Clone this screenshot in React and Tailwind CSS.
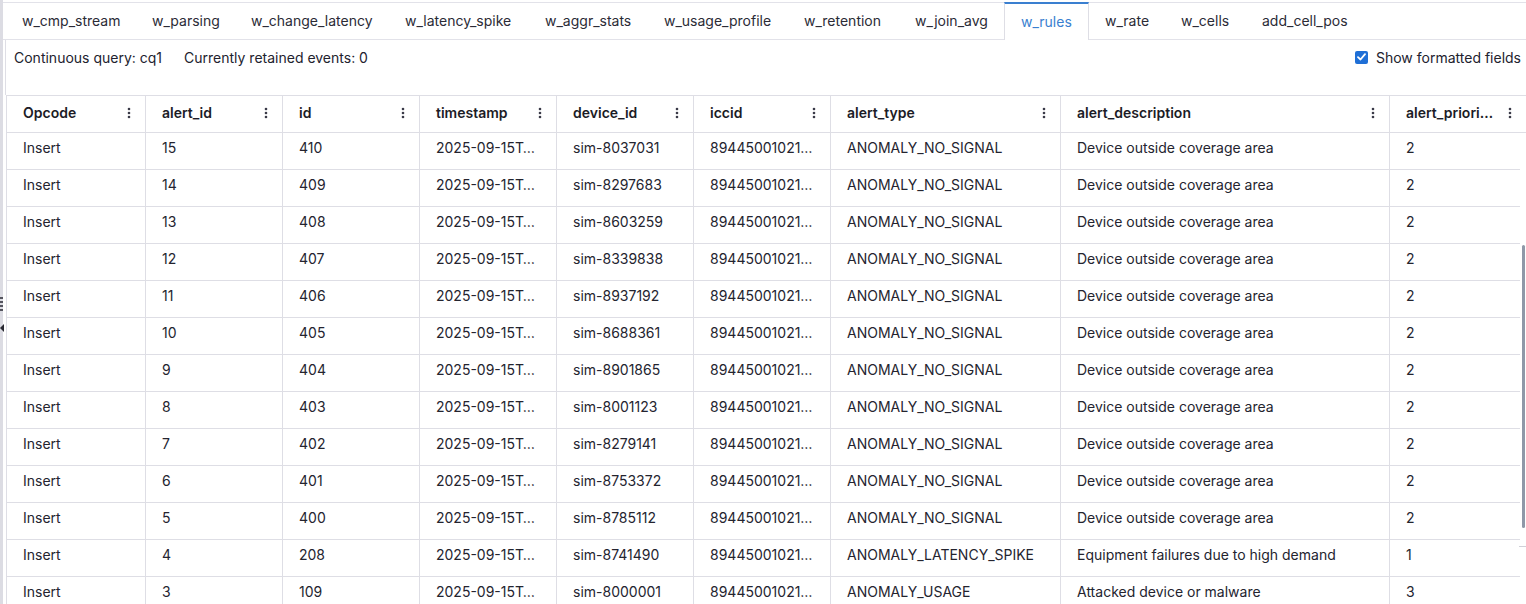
import React from "react";

const tabs = [
  ["w_cmp_stream", "w-[130px]"],
  ["w_parsing", "w-[99px]"],
  ["w_change_latency", "w-[154px]"],
  ["w_latency_spike", "w-[140px]"],
  ["w_aggr_stats", "w-[119px]"],
  ["w_usage_profile", "w-[140px]"],
  ["w_retention", "w-[111px]"],
  ["w_join_avg", "w-[105px]"],
  ["w_rules", "w-[85px]"],
  ["w_rate", "w-[76px]"],
  ["w_cells", "w-[81px]"],
  ["add_cell_pos", "w-auto"],
];

const headers = [
  "Opcode",
  "alert_id",
  "id",
  "timestamp",
  "device_id",
  "iccid",
  "alert_type",
  "alert_description",
  "alert_priori…",
];

const NS = ["ANOMALY_NO_SIGNAL", "Device outside coverage area", "2"];
const rows = [
  ["15", "410", "sim-8037031", ...NS],
  ["14", "409", "sim-8297683", ...NS],
  ["13", "408", "sim-8603259", ...NS],
  ["12", "407", "sim-8339838", ...NS],
  ["11", "406", "sim-8937192", ...NS],
  ["10", "405", "sim-8688361", ...NS],
  ["9", "404", "sim-8901865", ...NS],
  ["8", "403", "sim-8001123", ...NS],
  ["7", "402", "sim-8279141", ...NS],
  ["6", "401", "sim-8753372", ...NS],
  ["5", "400", "sim-8785112", ...NS],
  ["4", "208", "sim-8741490", "ANOMALY_LATENCY_SPIKE", "Equipment failures due to high demand", "1"],
  ["3", "109", "sim-8000001", "ANOMALY_USAGE", "Attacked device or malware", "3"],
];

const grid =
  "grid grid-cols-[139px_137px_137px_137px_137px_137px_230px_329px_137px]";

function Dots() {
  return (
    <svg width="4" height="14" viewBox="0 0 4 14" className="shrink-0">
      <circle cx="2" cy="3" r="1.3" fill="#3a3a48" />
      <circle cx="2" cy="7" r="1.3" fill="#3a3a48" />
      <circle cx="2" cy="11" r="1.3" fill="#3a3a48" />
    </svg>
  );
}

export default function App() {
  return (
    <div
      className="relative flex h-[604px] w-[1526px] overflow-hidden bg-white text-[14px] text-[#22222e]"
      style={{ fontFamily: "Inter, 'Noto Sans', sans-serif" }}
    >
      {/* left strip */}
      <div className="relative w-[3px] shrink-0 bg-[#dcdce3]">
        <div className="absolute left-0 top-[297px] flex flex-col gap-[2px]">
          <div className="h-[2px] w-[3px] bg-[#55555f]" />
          <div className="h-[2px] w-[3px] bg-[#55555f]" />
          <div className="h-[2px] w-[3px] bg-[#55555f]" />
          <div className="h-[2px] w-[3px] bg-[#55555f]" />
        </div>
        <svg
          className="absolute left-0 top-[324px]"
          width="5"
          height="8"
          viewBox="0 0 5 8"
        >
          <path d="M4 0 L0 4 L4 8 Z" fill="#2a2a33" />
        </svg>
      </div>

      <div className="flex min-w-0 flex-1 flex-col">
        {/* tab bar */}
        <div className="mt-[2px] flex h-[38px] shrink-0 border-y border-[#e2e2e9] pl-[3px]">
          {tabs.map(([t, w]) =>
            t === "w_rules" ? (
              <div
                key={t}
                className={`relative -mb-px -mt-px flex shrink-0 items-center border-x border-t-2 border-x-[#dedee5] border-t-[#3a7fd0] bg-white pb-[2px] pl-[16px] text-[#3a7fd0] ${w}`}
              >
                {t}
              </div>
            ) : (
              <div
                key={t}
                className={`flex shrink-0 items-center whitespace-nowrap pb-[1px] pl-4 text-[#2b2b36] ${w}`}
              >
                {t}
              </div>
            )
          )}
        </div>

        {/* panel */}
        <div className="ml-[2px] flex min-h-0 flex-1 flex-col">
          <div className="flex h-[55px] shrink-0 border-l border-[#dedee5]">
            <div className="flex h-[34px] flex-1 items-center pl-[8px]">
              <span>Continuous query: cq1</span>
              <span className="ml-[22px]">Currently retained events: 0</span>
              <div className="ml-auto mr-[5px] flex items-center whitespace-nowrap">
                <div className="mr-[8px] flex h-[13px] w-[13px] items-center justify-center rounded-[2px] bg-[#1f6fd6]">
                  <svg width="9" height="8" viewBox="0 0 9 8">
                    <path
                      d="M1 4.2 L3.5 6.5 L8 1.2"
                      stroke="white"
                      strokeWidth="1.8"
                      fill="none"
                      strokeLinecap="round"
                      strokeLinejoin="round"
                    />
                  </svg>
                </div>
                <span>Show formatted fields</span>
              </div>
            </div>
          </div>

          {/* table */}
          <div className="ml-px flex min-h-0 flex-1 flex-col border-l border-[#dedee5]">
            <div className={`${grid} h-[38px] shrink-0 border-y border-[#dedee5]`}>
              {headers.map((h) => (
                <div
                  key={h}
                  className="flex items-center justify-between border-r border-[#dedee5] pb-[3px] pl-4 pr-[14px] font-semibold text-[#1c1c26]"
                >
                  <span className="whitespace-nowrap">{h}</span>
                  <Dots />
                </div>
              ))}
            </div>
            <div className="w-[1513px] overflow-hidden">
              {rows.map((r, i) => (
                <div
                  key={i}
                  className={`${grid} h-[37px] border-b border-[#dedee5]`}
                >
                  {["Insert", r[0], r[1], "2025-09-15T…", r[2], "89445001021…", r[3], r[4], r[5]].map(
                    (c, j) => (
                      <div
                        key={j}
                        className="flex items-center whitespace-nowrap border-r border-[#dedee5] pb-[8px] pl-4 text-[#24242f]"
                      >
                        {c}
                      </div>
                    )
                  )}
                </div>
              ))}
            </div>
          </div>
        </div>
      </div>

      {/* scrollbar */}
      <div className="absolute right-[1px] top-[245px] h-[283px] w-[3px] rounded-sm bg-[#8f98a8]" />
      <div className="absolute right-0 top-[546px] h-px w-[7px] bg-[#d0d0d8]" />
    </div>
  );
}
